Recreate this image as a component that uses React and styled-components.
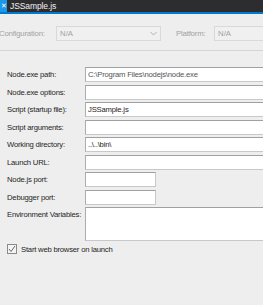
import React from "react";
import styled, { createGlobalStyle } from "styled-components";

const Global = createGlobalStyle`
  html, body { margin: 0; padding: 0; background: #eeeeee; }
  body { font-family: "Liberation Sans", Arial, sans-serif; overflow: hidden; }
`;

const Page = styled.div`
  width: 263px;
  height: 305px;
  background: #eeeeee;
  overflow: hidden;
`;

const TabBar = styled.div`
  height: 12px;
  background: #2d2d30;
  border-bottom: 2px solid #007acc;
  display: flex;
  align-items: center;
`;

const CloseBox = styled.div`
  width: 7px;
  height: 12px;
  background: #1c97ea;
  color: #fff;
  font-size: 7px;
  line-height: 12px;
  display: flex;
  align-items: center;
  justify-content: center;
`;

const TabTitle = styled.span`
  color: #f1f1f1;
  font-size: 8.5px;
  letter-spacing: -0.1px;
  line-height: 12px;
  margin-left: 3px;
`;

const ConfigRow = styled.div`
  display: flex;
  align-items: center;
  height: 17px;
  margin-top: 11px;
  white-space: nowrap;
`;

const DimLabel = styled.span`
  color: #a2a2a2;
  font-size: 7.8px;
  letter-spacing: -0.2px;
  margin-left: ${(p) => p.$ml}px;
  width: ${(p) => p.$w}px;
  flex: none;
`;

const Combo = styled.div`
  flex: none;
  width: ${(p) => p.$w}px;
  height: 15px;
  border: 1px solid #d9d9d9;
  background: #f0f0f0;
  display: flex;
  align-items: center;
  justify-content: space-between;
  padding: 0 3px;
  box-sizing: border-box;
  color: #a2a2a2;
  font-size: 7.8px;
`;

const Separator = styled.div`
  height: 1px;
  background: #d5d5d5;
  margin-top: 8px;
`;

const Form = styled.div`
  display: grid;
  grid-template-columns: 78px 1fr;
  row-gap: 2.5px;
  padding-left: 7px;
  margin-top: 16px;
`;

const Label = styled.label`
  font-size: 7.7px;
  letter-spacing: -0.22px;
  color: #1e1e1e;
  display: flex;
  align-items: ${(p) => (p.$top ? "flex-start" : "center")};
  padding-top: ${(p) => (p.$top ? 3 : 0)}px;
  white-space: nowrap;
`;

const Input = styled.div`
  height: 15px;
  width: ${(p) => (p.$w ? `${p.$w}px` : "auto")};
  box-sizing: border-box;
  background: #fff;
  border: 1px solid #abadb3;
  border-top-color: #a0a0a0;
  border-bottom-color: #c8c8c8;
  border-right: ${(p) => (p.$w ? "1px solid #c8c8c8" : "none")};
  font-size: 7.7px;
  letter-spacing: -0.2px;
  color: ${(p) => (p.$dim ? "#555" : "#1e1e1e")};
  line-height: 13px;
  padding-left: 2px;
  white-space: nowrap;
  overflow: hidden;
`;

const TextArea = styled(Input)`
  height: 34px;
`;

const CheckRow = styled.div`
  display: flex;
  align-items: center;
  gap: 4px;
  padding-left: 7px;
  margin-top: 3px;
  font-size: 7.7px;
  letter-spacing: -0.22px;
  color: #1e1e1e;
`;

const Box = styled.div`
  width: 10px;
  height: 10px;
  box-sizing: border-box;
  border: 1px solid #8a8a8a;
  background: #f4f4f4;
  display: flex;
  align-items: center;
  justify-content: center;
`;

const rows = [
  ["Node.exe path:", "C:\\Program Files\\nodejs\\node.exe", null, true],
  ["Node.exe options:", "", null],
  ["Script (startup file):", "JSSample.js", null],
  ["Script arguments:", "", null],
  ["Working directory:", "..\\..\\bin\\", null],
  ["Launch URL:", "", null],
  ["Node.js port:", "", 71],
  ["Debugger port:", "", 71],
];

export default function App() {
  return (
    <Page>
      <Global />
      <TabBar>
        <CloseBox>✕</CloseBox>
        <TabTitle>JSSample.js</TabTitle>
      </TabBar>
      <ConfigRow>
        <DimLabel $ml={-1} $w={57}>Configuration:</DimLabel>
        <Combo $w={105}>
          <span>N/A</span>
          <svg width="7" height="5" viewBox="0 0 7 5">
            <path d="M0.5 1 L3.5 4 L6.5 1" fill="none" stroke="#b0b0b0" strokeWidth="1" />
          </svg>
        </Combo>
        <DimLabel $ml={15} $w={38}>Platform:</DimLabel>
        <Combo $w={60}>
          <span>N/A</span>
        </Combo>
      </ConfigRow>
      <Separator />
      <Form>
        {rows.map(([l, v, w, dim]) => (
          <React.Fragment key={l}>
            <Label>{l}</Label>
            <Input $w={w} $dim={dim}>{v}</Input>
          </React.Fragment>
        ))}
        <Label $top>Environment Variables:</Label>
        <TextArea />
      </Form>
      <CheckRow>
        <Box>
          <svg width="8" height="8" viewBox="0 0 8 8">
            <path d="M1 4 L3 6.5 L7 1" fill="none" stroke="#6a6a6a" strokeWidth="1" />
          </svg>
        </Box>
        <span>Start web browser on launch</span>
      </CheckRow>
    </Page>
  );
}
